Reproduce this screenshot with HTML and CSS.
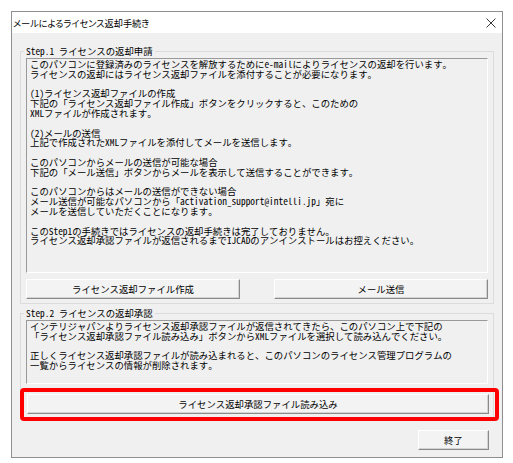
FILE: index.html
```html
<!DOCTYPE html>
<html lang="ja">
<head>
  <meta charset="UTF-8" />
  <title>メールによるライセンス返却手続き</title>
  <link rel="stylesheet" href="styles.css">
</head>
<body>
  <div class="window">
    <!-- Title bar -->
    <div class="titlebar">
      <span class="title">メールによるライセンス返却手続き</span>
      <svg class="close" width="10" height="10" viewBox="0 0 10 10">
        <path d="M0.5 0.5 L9.5 9.5 M9.5 0.5 L0.5 9.5" stroke="#222" stroke-width="0.9" fill="none" />
      </svg>
    </div>

    <div class="client">
      <!-- Step 1 -->
      <fieldset class="group">
        <legend>Step.1 ライセンスの返却申請</legend>
        <div class="textbox tb-step1">
          <p>このパソコンに登録済みのライセンスを解放するためにe-mailによりライセンスの返却を行います。<br>ライセンスの返却にはライセンス返却ファイルを添付することが必要になります。</p>
          <p>(1)ライセンス返却ファイルの作成<br>下記の「ライセンス返却ファイル作成」ボタンをクリックすると、このための<br>XMLファイルが作成されます。</p>
          <p>(2)メールの送信<br>上記で作成されたXMLファイルを添付してメールを送信します。</p>
          <p>このパソコンからメールの送信が可能な場合<br>下記の「メール送信」ボタンからメールを表示して送信することができます。</p>
          <p>このパソコンからはメールの送信ができない場合<br>メール送信が可能なパソコンから「activation_support@intelli.jp」宛に<br>メールを送信していただくことになります。</p>
          <p>このStep1の手続きではライセンスの返却手続きは完了しておりません。<br>ライセンス返却承認ファイルが返信されるまでIJCADのアンインストールはお控えください。</p>
        </div>
        <div class="btn-row">
          <button class="btn">ライセンス返却ファイル作成</button>
          <button class="btn">メール送信</button>
        </div>
      </fieldset>

      <!-- Step 2 -->
      <fieldset class="group group-step2">
        <legend>Step.2 ライセンスの返却承認</legend>
        <div class="textbox tb-step2">
          <p>インテリジャパンよりライセンス返却承認ファイルが返信されてきたら、このパソコン上で下記の<br>「ライセンス返却承認ファイル読み込み」ボタンからXMLファイルを選択して読み込んでください。</p>
          <p>正しくライセンス返却承認ファイルが読み込まれると、このパソコンのライセンス管理プログラムの<br>一覧からライセンスの情報が削除されます。</p>
        </div>
        <div class="highlight">
          <button class="btn btn-wide">ライセンス返却承認ファイル読み込み</button>
        </div>
      </fieldset>

      <div class="footer">
        <button class="btn btn-close">終了</button>
      </div>
    </div>
  </div>
</body>
</html>
```

FILE: styles.css
```css
/* Global */
* { box-sizing: border-box; margin: 0; padding: 0; }
body {
  background: #ffffff;
  color: #000000;
  font-family: "Noto Sans Mono CJK JP", "Noto Sans CJK JP", monospace;
  font-size: 9.4px;
}
/* Dialog window */
.window {
  width: 492px;
  height: 447px;
  margin: 11px 0 0 11px;
  border: 1px solid #8f8f8f;
  background: #f0f0f0;
  display: flex;
  flex-direction: column;
}
.titlebar {
  height: 21px;
  background: #ffffff;
  display: flex;
  align-items: center;
  justify-content: space-between;
  padding: 0 6px 0 1px;
}
.title {
  font-family: "Noto Sans CJK JP", sans-serif;
  font-feature-settings: "palt";
  font-size: 9.2px;
}
.client {
  flex: 1;
  padding: 13px 8px 0 8px;
}
/* Group boxes */
.group {
  border: 1px solid #dcdcdc;
  padding: 0 5px 4px 5px;
}
.group legend {
  margin-left: -2px;
  padding: 0 2px;
  line-height: 10px;
}
.group-step2 {
  margin-top: 4px;
  padding-bottom: 0;
}
/* Read-only text areas */
.textbox {
  margin-top: 2px;
  border: 1px solid;
  border-color: #999999 #ffffff #ffffff #999999;
  padding: 1px 3px;
  line-height: 9.8px;
  white-space: nowrap;
}
.textbox p + p { margin-top: 9.8px; }
.tb-step1 { height: 215px; }
.tb-step2 { height: 64px; }
/* Buttons */
.btn {
  height: 20px;
  font: inherit;
  color: #000;
  background: #f3f3f3;
  border: 1px solid;
  border-color: #ffffff #8a8a8a #8a8a8a #ffffff;
  box-shadow: inset -1px -1px 0 #d4d4d4;
}
.btn-row {
  display: flex;
  justify-content: space-between;
  margin-top: 6px;
}
.btn-row .btn { width: 214px; }
.btn-wide { width: 100%; }
/* Red annotation frame */
.highlight {
  margin: 4px -11px -3px -6px;
  padding: 2px 6px 3px 3px;
  border: 4px solid #ff0000;
  border-radius: 4px;
}
.footer {
  display: flex;
  justify-content: flex-end;
  margin-top: 11px;
  padding-right: 5px;
}
.btn-close { width: 71px; }
```
